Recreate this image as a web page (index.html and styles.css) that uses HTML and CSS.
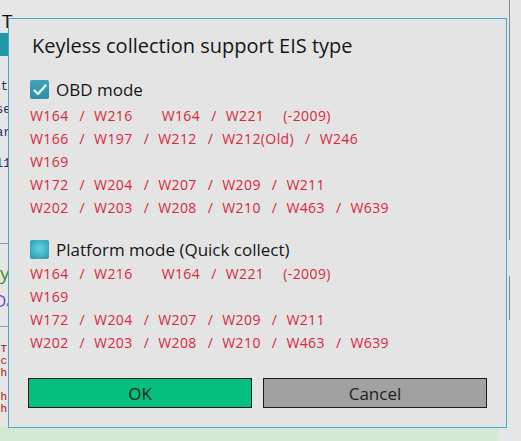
FILE: index.html
```html
<!DOCTYPE html>
<html lang="en">
<head>
  <meta charset="UTF-8">
  <title>Keyless collection support EIS type</title>
  <link rel="stylesheet" href="styles.css">
</head>
<body>
  <div class="backdrop">
    <div class="bg-title">Tyres</div>
    <div class="bg-tab"></div>
    <div class="bg-code">
      <div>t</div>
      <div>se</div>
      <div>ar</div>
      <div class="gap">l1</div>
    </div>
    <div class="bg-rule r1"></div>
    <div class="bg-green">y</div>
    <div class="bg-purple">Da</div>
    <div class="bg-rule r2"></div>
    <div class="bg-red">
      <div>T</div>
      <div>c</div>
      <div>h</div>
      <div>&nbsp;</div>
      <div>h</div>
      <div>h</div>
    </div>
    <div class="bg-foot"></div>
    <div class="bg-scroll s1"></div>
    <div class="bg-scroll s2"></div>
  </div>

  <div class="dialog">
    <h1 class="title">Keyless collection support EIS type</h1>

    <div class="mode">
      <span class="check checked">
        <svg width="14" height="12" viewBox="0 0 14 12"><path d="M1.5 6.5 L5 10 L12.5 1.5" fill="none" stroke="#e8fbe8" stroke-width="2.4" stroke-linecap="round" stroke-linejoin="round"/></svg>
      </span>
      OBD mode
    </div>
    <div class="types">
      <div class="row"><span>W164</span><i>/</i><span>W216</span><b></b><span>W164</span><i>/</i><span>W221</span><b class="s"></b><span>(-2009)</span></div>
      <div class="row"><span>W166</span><i>/</i><span>W197</span><i>/</i><span>W212</span><i>/</i><span>W212(Old)</span><i>/</i><span>W246</span></div>
      <div class="row"><span>W169</span></div>
      <div class="row"><span>W172</span><i>/</i><span>W204</span><i>/</i><span>W207</span><i>/</i><span>W209</span><i>/</i><span>W211</span></div>
      <div class="row"><span>W202</span><i>/</i><span>W203</span><i>/</i><span>W208</span><i>/</i><span>W210</span><i>/</i><span>W463</span><i>/</i><span>W639</span></div>
    </div>

    <div class="mode platform">
      <span class="check"></span>
      Platform mode (Quick collect)
    </div>
    <div class="types">
      <div class="row"><span>W164</span><i>/</i><span>W216</span><b></b><span>W164</span><i>/</i><span>W221</span><b class="s"></b><span>(-2009)</span></div>
      <div class="row"><span>W169</span></div>
      <div class="row"><span>W172</span><i>/</i><span>W204</span><i>/</i><span>W207</span><i>/</i><span>W209</span><i>/</i><span>W211</span></div>
      <div class="row"><span>W202</span><i>/</i><span>W203</span><i>/</i><span>W208</span><i>/</i><span>W210</span><i>/</i><span>W463</span><i>/</i><span>W639</span></div>
    </div>

    <div class="buttons">
      <button class="btn ok">OK</button>
      <button class="btn cancel">Cancel</button>
    </div>
  </div>
</body>
</html>
```

FILE: styles.css
```css
body { margin: 0; width: 521px; height: 441px; overflow: hidden; background: #e6e6e6; font-family: "Open Sans", "Noto Sans", sans-serif; position: relative; }

/* app behind the dialog */
.backdrop { width: 521px; height: 441px; position: relative; }
.bg-title { position: absolute; left: 2px; top: 8px; font-size: 19px; line-height: 26px; color: #111; }
.bg-tab { position: absolute; left: 0; top: 33px; width: 9px; height: 23px; background: #1e98a6; }
.bg-code { position: absolute; left: -4px; top: 76px; font-family: "Liberation Mono", monospace; font-size: 12px; line-height: 23px; color: #1d2a5c; text-align: right; width: 12px; }
.bg-code .gap { margin-top: 8px; }
.bg-rule { position: absolute; left: 0; width: 9px; height: 1px; background: #999; }
.bg-rule.r1 { top: 243px; }
.bg-rule.r2 { top: 326px; }
.bg-green { position: absolute; left: 0; top: 260px; font-size: 19px; color: #3b8a2a; }
.bg-purple { position: absolute; left: -6px; top: 289px; font-size: 17px; color: #6a3fd0; }
.bg-red { position: absolute; left: -2px; top: 343px; font-family: "Liberation Mono", monospace; font-size: 11px; line-height: 12px; color: #a01010; text-align: right; width: 9px; }
.bg-foot { position: absolute; left: 0; bottom: 0; width: 498px; height: 14px; background: #d3e9d3; }
.bg-scroll { position: absolute; left: 509px; width: 1px; background: #8a8a8a; }
.bg-scroll.s1 { top: 0; height: 240px; }
.bg-scroll.s2 { top: 276px; height: 44px; }

/* dialog */
.dialog { position: absolute; left: 8px; top: 18px; width: 476px; height: 395px; padding: 13px 0 0 21px; border: 1px solid #45abcc; background: #e4e4e4; }
.title { margin: 0 0 18px 2px; font-size: 20px; font-weight: normal; line-height: 28px; color: #161616; }

.mode { display: flex; align-items: center; gap: 7px; height: 23px; font-size: 17px; color: #161616; }
.platform { margin-top: 19px; }
.check { width: 19px; height: 19px; border-radius: 2px; display: flex; align-items: center; justify-content: center; background: radial-gradient(circle at 50% 45%, #66d4e0 0%, #3fb3c4 55%, #2a8fa3 100%); }
.check.checked { background: linear-gradient(#3ca5b9, #2c8ea4); }

.types { margin-top: 3px; font-size: 14px; line-height: 23px; color: #d8283a; letter-spacing: 0.4px; }
.platform + .types { margin-top: 1px; }
.row { display: flex; gap: 9px; }
.row i { font-style: normal; padding-left: 2px; }
.row b { width: 11px; }
.row b.s { width: 1px; }

.buttons { display: flex; gap: 11px; margin: 24px 0 0 -2px; }
.btn { width: 224px; height: 30px; border: 1px solid #1a1a1a; font-family: inherit; font-size: 17px; color: #1e1e1e; padding: 0; }
.ok { background: #04c07f; }
.cancel { background: #a1a1a1; }
```
